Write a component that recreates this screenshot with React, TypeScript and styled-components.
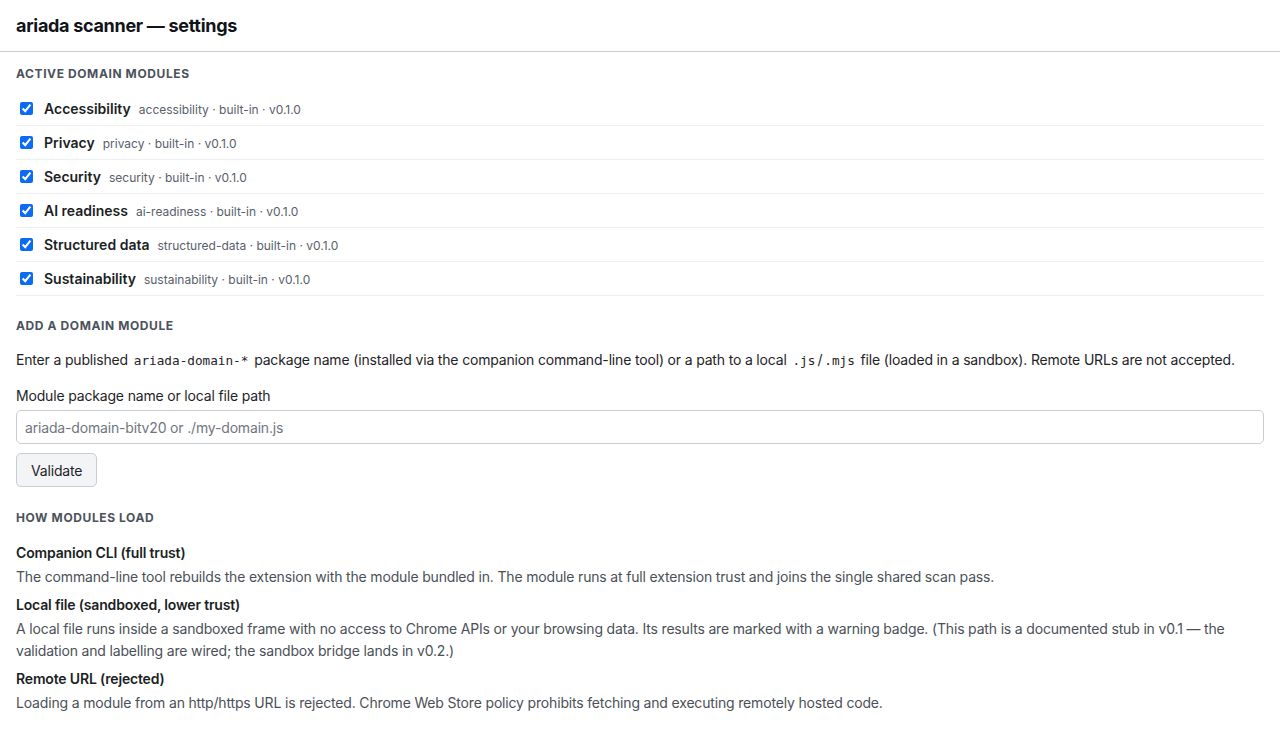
import { createGlobalStyle } from 'styled-components';
import styled from 'styled-components';

const GlobalStyle = createGlobalStyle`
  html, body {
    margin: 0;
    padding: 0;
    background: #ffffff;
  }
  body {
    font-family: Inter, "Noto Sans", "Liberation Sans", sans-serif;
    color: #1f2328;
    font-size: 14px;
    letter-spacing: -0.17px;
  }
`;

const Header = styled.header`
  padding: 15px 16px 14px;
  border-bottom: 1px solid #c9ccd1;
`;

const Title = styled.h1`
  margin: 0;
  font-size: 18px;
  line-height: 22px;
  font-weight: 700;
  color: #111418;
  letter-spacing: -0.3px;
`;

const Main = styled.main`
  padding: 14px 16px 24px;
`;

const Section = styled.section<{ $gap: number }>`
  margin-top: ${({ $gap }) => $gap}px;

  &:first-child {
    margin-top: 0;
  }
`;

const SectionTitle = styled.h2<{ $after: number }>`
  margin: 0 0 ${({ $after }) => $after}px;
  font-size: 12px;
  line-height: 16px;
  font-weight: 700;
  letter-spacing: 0.6px;
  text-transform: uppercase;
  color: #4b525c;
`;

const ModuleList = styled.ul`
  list-style: none;
  margin: 0;
  padding: 0;
`;

const ModuleRow = styled.li`
  display: flex;
  align-items: center;
  height: 33px;
  border-bottom: 1px solid #eceef1;
`;

const Check = styled.input`
  width: 13px;
  height: 13px;
  margin: 0 3px 0 4px;
  accent-color: #0b6bf2;
`;

const ModuleLabel = styled.label`
  display: flex;
  align-items: baseline;
  gap: 8px;
  margin-left: 8px;
  letter-spacing: 0;
`;

const ModuleName = styled.span`
  font-size: 14px;
  font-weight: 600;
  color: #1b1f24;
`;

const ModuleMeta = styled.span`
  font-size: 12px;
  color: #57606a;
`;

const Paragraph = styled.p`
  margin: 0;
  font-size: 14px;
  line-height: 20px;
  color: #1f2328;
`;

const Code = styled.code`
  padding: 0 2px;
  font-family: "DejaVu Sans Mono", "Liberation Mono", monospace;
  font-size: 12.7px;
  letter-spacing: 0;
`;

const FieldLabel = styled.label`
  display: block;
  margin-top: 15px;
  font-size: 14px;
  line-height: 20px;
`;

const TextInput = styled.input`
  display: block;
  box-sizing: border-box;
  width: 100%;
  height: 34px;
  margin-top: 4px;
  padding: 0 8px;
  border: 1px solid #c8ccd3;
  border-radius: 5px;
  font-family: inherit;
  font-size: 14px;
  letter-spacing: -0.17px;
  color: #1f2328;
  background: #fff;

  &::placeholder {
    color: #70767e;
  }
`;

const Button = styled.button`
  display: block;
  height: 34px;
  margin-top: 9px;
  padding: 0 14px;
  border: 1px solid #c8ccd3;
  border-radius: 5px;
  background: #f3f4f6;
  font-family: inherit;
  font-size: 14px;
  letter-spacing: -0.17px;
  color: #1f2328;
`;

const ModeTitle = styled.h3`
  margin: 7px 0 0;
  font-size: 14px;
  line-height: 20px;
  font-weight: 600;
  color: #1b1f24;
`;

const ModeText = styled.p`
  margin: 3px 0 0;
  font-size: 14px;
  line-height: 22px;
  color: #4a5058;
`;

const modules = [
  { name: 'Accessibility', id: 'accessibility' },
  { name: 'Privacy', id: 'privacy' },
  { name: 'Security', id: 'security' },
  { name: 'AI readiness', id: 'ai-readiness' },
  { name: 'Structured data', id: 'structured-data' },
  { name: 'Sustainability', id: 'sustainability' },
];

const modes = [
  {
    title: 'Companion CLI (full trust)',
    text: 'The command-line tool rebuilds the extension with the module bundled in. The module runs at full extension trust and joins the single shared scan pass.',
  },
  {
    title: 'Local file (sandboxed, lower trust)',
    text: 'A local file runs inside a sandboxed frame with no access to Chrome APIs or your browsing data. Its results are marked with a warning badge. (This path is a documented stub in v0.1 — the validation and labelling are wired; the sandbox bridge lands in v0.2.)',
  },
  {
    title: 'Remote URL (rejected)',
    text: 'Loading a module from an http/https URL is rejected. Chrome Web Store policy prohibits fetching and executing remotely hosted code.',
  },
];

export default function App() {
  return (
    <>
      <GlobalStyle />
      <Header>
        <Title>ariada scanner — settings</Title>
      </Header>
      <Main>
        <Section $gap={0}>
          <SectionTitle $after={10}>Active domain modules</SectionTitle>
          <ModuleList>
            {modules.map((m) => (
              <ModuleRow key={m.id}>
                <Check type="checkbox" id={`mod-${m.id}`} defaultChecked />
                <ModuleLabel htmlFor={`mod-${m.id}`}>
                  <ModuleName>{m.name}</ModuleName>
                  <ModuleMeta>{m.id} · built-in · v0.1.0</ModuleMeta>
                </ModuleLabel>
              </ModuleRow>
            ))}
          </ModuleList>
        </Section>

        <Section $gap={22}>
          <SectionTitle $after={16}>Add a domain module</SectionTitle>
          <Paragraph>
            Enter a published <Code>ariada-domain-*</Code> package name (installed via the companion
            command-line tool) or a path to a local <Code>.js</Code>/<Code>.mjs</Code> file (loaded in
            a sandbox). Remote URLs are not accepted.
          </Paragraph>
          <FieldLabel htmlFor="module-path">Module package name or local file path</FieldLabel>
          <TextInput id="module-path" placeholder="ariada-domain-bitv20 or ./my-domain.js" />
          <Button type="button">Validate</Button>
        </Section>

        <Section $gap={23}>
          <SectionTitle $after={17}>How modules load</SectionTitle>
          {modes.map((m) => (
            <div key={m.title}>
              <ModeTitle>{m.title}</ModeTitle>
              <ModeText>{m.text}</ModeText>
            </div>
          ))}
        </Section>
      </Main>
    </>
  );
}
